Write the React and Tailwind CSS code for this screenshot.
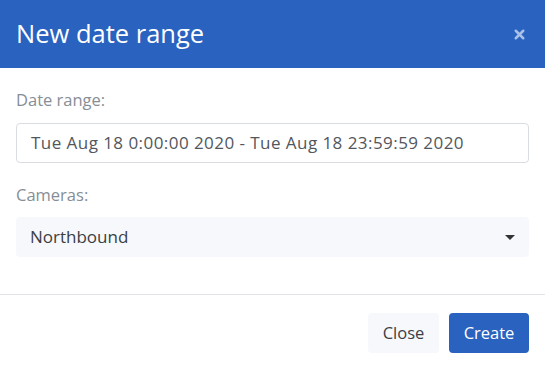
import { X } from "lucide-react";

export default function App() {
  return (
    <div
      className="w-[545px] h-[370px] bg-white overflow-hidden"
      style={{ fontFamily: "'Open Sans', 'Noto Sans', sans-serif" }}
    >
      {/* Header */}
      <div className="h-[68px] bg-[#2962bf] flex items-center justify-between pl-4 pr-[18px]">
        <h1 className="text-[25.5px] text-white leading-none">New date range</h1>
        <button className="text-[#a9c0ea]">
          <X className="w-[15px] h-[15px]" strokeWidth={4} />
        </button>
      </div>

      {/* Body */}
      <div className="px-4 pt-[20px] pb-[37px] border-b border-[#e2e4e8]">
        <label className="block text-[16.5px] text-[#868e96] leading-6 mb-[11px]">
          Date range:
        </label>
        <div className="h-[40px] border border-[#d9dce1] rounded-[4px] flex items-center px-[14px] text-[17px] text-[#51575d] tracking-[0.45px]">
          Tue Aug 18 0:00:00 2020 - Tue Aug 18 23:59:59 2020
        </div>

        <label className="block text-[16.5px] text-[#868e96] leading-6 mt-[20px] mb-[10px]">
          Cameras:
        </label>
        <div className="h-[40px] bg-[#f7f8fb] rounded-[4px] flex items-center justify-between pl-[14px] pr-[14px] text-[17px] text-[#3b3f44]">
          <span>Northbound</span>
          <span className="w-0 h-0 border-l-[5px] border-r-[5px] border-t-[5px] border-l-transparent border-r-transparent border-t-[#333]" />
        </div>
      </div>

      {/* Footer */}
      <div className="flex justify-end gap-[10px] px-4 pt-[18px]">
        <button className="h-[40px] w-[71px] rounded-[4px] bg-[#f7f8fb] text-[16.5px] text-[#3b3f44]">
          Close
        </button>
        <button className="h-[40px] w-[80px] rounded-[4px] bg-[#2962bf] text-[16.5px] text-white">
          Create
        </button>
      </div>
    </div>
  );
}
